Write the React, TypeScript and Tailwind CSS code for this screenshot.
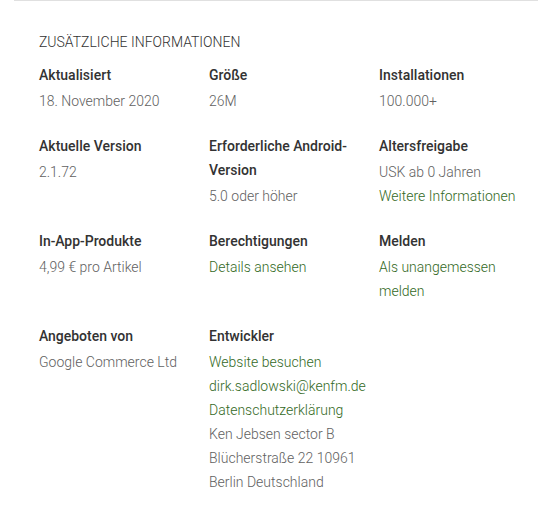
import React from "react";

type Line = { text: string; link?: boolean };
type Item = { label: string; values: Line[] };

const rows: Item[][] = [
  [
    { label: "Aktualisiert", values: [{ text: "18. November 2020" }] },
    { label: "Größe", values: [{ text: "26M" }] },
    { label: "Installationen", values: [{ text: "100.000+" }] },
  ],
  [
    { label: "Aktuelle Version", values: [{ text: "2.1.72" }] },
    { label: "Erforderliche Android-Version", values: [{ text: "5.0 oder höher" }] },
    {
      label: "Altersfreigabe",
      values: [{ text: "USK ab 0 Jahren" }, { text: "Weitere Informationen", link: true }],
    },
  ],
  [
    { label: "In-App-Produkte", values: [{ text: "4,99 € pro Artikel" }] },
    { label: "Berechtigungen", values: [{ text: "Details ansehen", link: true }] },
    { label: "Melden", values: [{ text: "Als unangemessen melden", link: true }] },
  ],
  [
    { label: "Angeboten von", values: [{ text: "Google Commerce Ltd" }] },
    {
      label: "Entwickler",
      values: [
        { text: "Website besuchen", link: true },
        { text: "dirk.sadlowski@kenfm.de", link: true },
        { text: "Datenschutzerklärung", link: true },
        { text: "Ken Jebsen sector B" },
        { text: "Blücherstraße 22 10961" },
        { text: "Berlin Deutschland" },
      ],
    },
  ],
];

function InfoCell({ item }: { item: Item }) {
  return (
    <div className="w-[170px] shrink-0 pr-4">
      <div className="font-['Roboto_Medium','Roboto',sans-serif] text-[14px] font-medium leading-6 text-[#333333]">
        {item.label}
      </div>
      <div className="mt-[2px] font-['Roboto_Light','Roboto',sans-serif]">
        {item.values.map((v) => (
          <div
            key={v.text}
            className={
              v.link
                ? "text-[14px] font-light leading-6 text-[#33691e]"
                : "text-[14px] font-light leading-6 text-[#616161]"
            }
          >
            {v.text}
          </div>
        ))}
      </div>
    </div>
  );
}

export default function App() {
  return (
    <main className="min-h-[520px] w-[539px] bg-white font-['Roboto',sans-serif]">
      <section className="ml-[14px] mr-[1px] border-t border-[#e0e0e0] pl-[25px] pt-[33px]">
        <h2 className="font-['Roboto_Light','Roboto',sans-serif] text-[14px] font-light uppercase leading-4 text-[#333333]">
          Zusätzliche Informationen
        </h2>
        <div className="mt-[13px] flex flex-col gap-[21px]">
          {rows.map((row, i) => (
            <div key={i} className="flex">
              {row.map((item) => (
                <InfoCell key={item.label} item={item} />
              ))}
            </div>
          ))}
        </div>
      </section>
    </main>
  );
}
